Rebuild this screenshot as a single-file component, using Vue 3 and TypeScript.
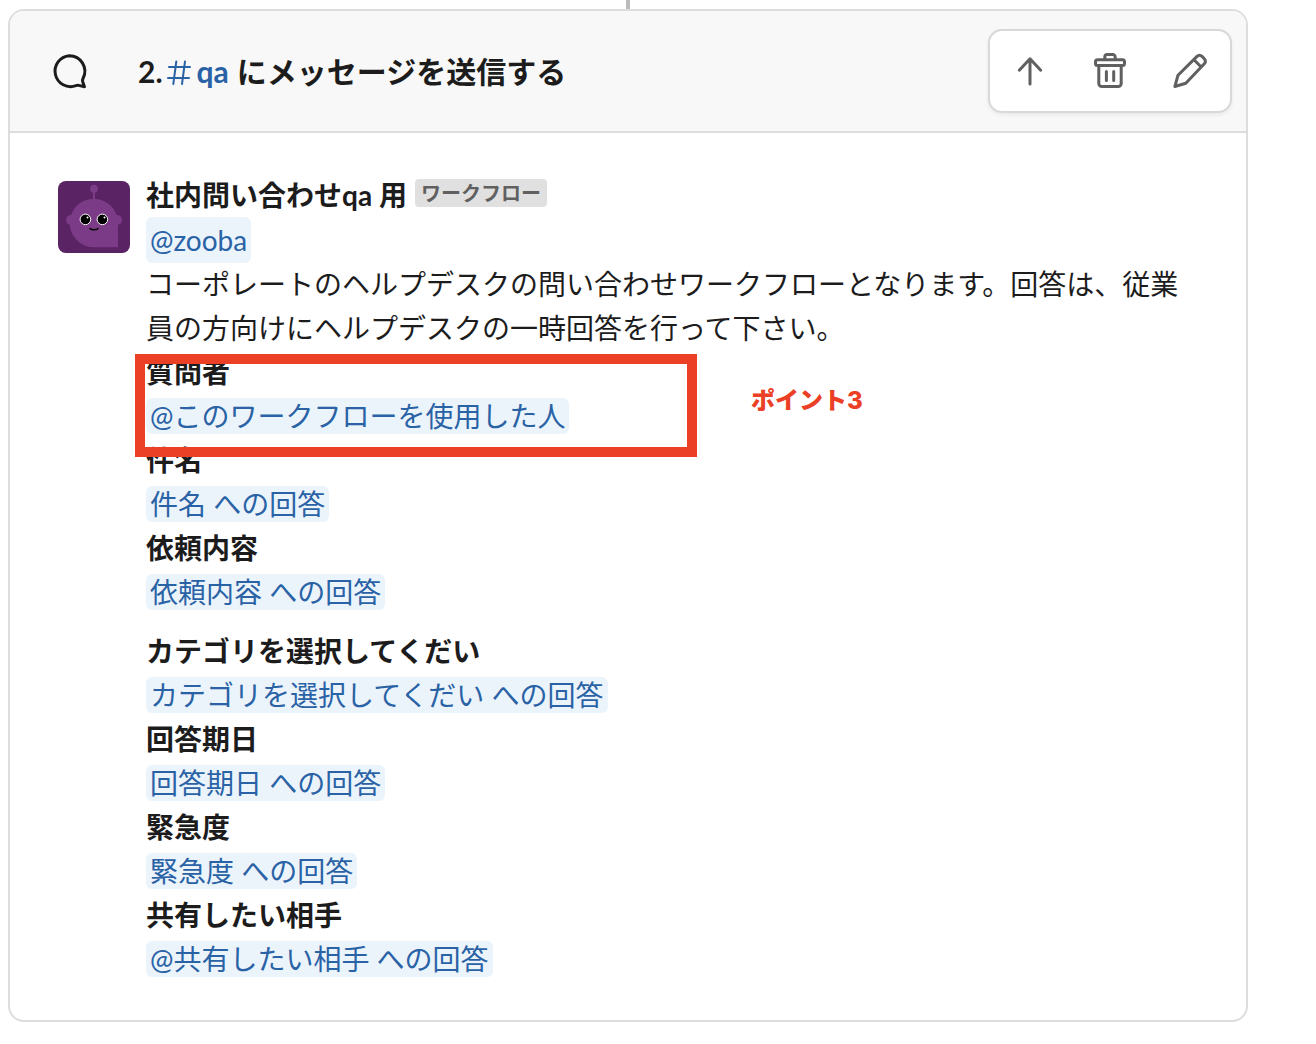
<script setup lang="ts">
interface Field {
  label: string
  value: string
  spaced?: boolean
}

const channel = 'qa'

const fields: Field[] = [
  { label: '質問者', value: '@このワークフローを使用した人' },
  { label: '件名', value: '件名 への回答' },
  { label: '依頼内容', value: '依頼内容 への回答' },
  { label: 'カテゴリを選択してくだい', value: 'カテゴリを選択してくだい への回答', spaced: true },
  { label: '回答期日', value: '回答期日 への回答' },
  { label: '緊急度', value: '緊急度 への回答' },
  { label: '共有したい相手', value: '@共有したい相手 への回答' },
]
</script>

<template>
  <main class="page">
    <div class="connector"></div>
    <section class="step">
      <header class="step-header">
        <svg class="icon bubble" viewBox="0 0 40 40" aria-hidden="true">
          <path d="M19.3 4.700a15.500 15.500 0 0 1 13.800 22.600c-.6 1.200-.7 2.200-.4 3.400l1.800 5-5.800-1.300c-1-.2-1.900-.1-2.800.3A15.500 15.500 0 1 1 19.300 4.700z" />
        </svg>
        <h2 class="title">
          <span>2.</span>
          <span class="channel">
            <svg class="hash" viewBox="0 0 24 24" aria-hidden="true">
              <path d="M2 8h21M1 19h21M9.300 2.500 6.300 25M18 2.500l-3 22.500" />
            </svg>
            <span>{{ channel }}</span>
          </span>
          <span>にメッセージを送信する</span>
        </h2>
        <div class="actions">
          <button type="button" aria-label="上に移動">
            <svg class="icon" viewBox="0 0 40 40"><path d="M20 33V8M9.300 19.200 20 7.800l10.700 11.400" /></svg>
          </button>
          <button type="button" aria-label="削除">
            <svg class="icon" viewBox="0 0 40 40">
              <path d="M14.800 8.500V6a2.500 2.500 0 0 1 2.500-2.500h5.400a2.500 2.500 0 0 1 2.500 2.500v2.500M8.800 15v17.500a3 3 0 0 0 3 3h16.400a3 3 0 0 0 3-3V15M16.400 20.500v9M23.700 20.500v9" />
              <rect x="5.500" y="8.800" width="29" height="5.600" rx="2" />
            </svg>
          </button>
          <button type="button" aria-label="編集">
            <svg class="icon" viewBox="0 0 40 40">
              <path d="M4.900 35.500 8 24.200 27 5.400c1.500-1.400 3.500-1.400 5 0l2.300 2.300c1.500 1.500 1.500 3.500 0 5L15.800 32.300zM24 8.800l7.200 7.200" />
            </svg>
          </button>
        </div>
      </header>

      <div class="message">
        <svg class="avatar" viewBox="0 0 72 72" aria-hidden="true">
          <rect width="72" height="72" fill="#5a2364" />
          <g fill="#7c3b87">
            <circle cx="36" cy="7.700" r="4" />
            <rect x="35" y="9" width="2" height="12" />
            <circle cx="13" cy="39" r="5" />
            <circle cx="59" cy="39" r="5" />
            <path d="M36 17.700A24.300 24.300 0 0 0 36 66.300H60V42A24.300 24.300 0 0 0 36 17.700z" />
          </g>
          <circle cx="27.400" cy="38.400" r="5.300" fill="#000" stroke="#fff" />
          <circle cx="44.400" cy="38.400" r="5.300" fill="#000" stroke="#fff" />
          <circle cx="29.500" cy="36.500" r="1" fill="#fff" />
          <circle cx="46.500" cy="36.500" r="1" fill="#fff" />
          <path d="M31.500 47.300q4.500 3 9 0" fill="none" stroke="#000" stroke-width="1.500" />
        </svg>
        <div class="content">
          <div class="author">
            <strong>社内問い合わせqa 用</strong>
            <span class="badge">ワークフロー</span>
          </div>
          <div class="mention"><span class="chip tall">@zooba</span></div>
          <p class="text">コーポレートのヘルプデスクの問い合わせワークフローとなります。回答は、従業員の方向けにヘルプデスクの一時回答を行って下さい。</p>
          <dl class="fields">
            <div v-for="field in fields" :key="field.label" :class="{ spaced: field.spaced }">
              <dt>{{ field.label }}</dt>
              <dd><span class="chip">{{ field.value }}</span></dd>
            </div>
            <div class="callout">
              <div class="frame"></div>
              <span class="note">ポイント3</span>
            </div>
          </dl>
        </div>
      </div>
    </section>
  </main>
</template>

<style>
body {
  background: #fff;
}
</style>

<style scoped>
.page {
  box-sizing: border-box;
  padding: 0 68px 22px 8px;
  color: #1d1c1d;
  font-family: Lato, "Noto Sans CJK JP", sans-serif;
  font-size: 28px;
  line-height: 44px;
}

.connector {
  width: 4px;
  height: 9px;
  margin: 0 auto;
  background: #bbb;
}

.step {
  border: 2px solid #ddd;
  border-radius: 16px;
  overflow: hidden;
}

.step-header {
  display: flex;
  align-items: center;
  min-height: 120px;
  padding: 0 14px 0 40px;
  border-bottom: 2px solid #ddd;
  background: #f8f8f8;
}

.icon {
  display: block;
  width: 40px;
  height: 40px;
  fill: none;
  stroke: currentColor;
  stroke-width: 3;
  stroke-linecap: round;
  stroke-linejoin: round;
}

.bubble {
  flex: none;
}

.title {
  display: flex;
  flex: 1;
  align-items: center;
  gap: 8px;
  margin: 0 0 0 48px;
  font-size: 30px;
  font-weight: 700;
}

.channel {
  display: flex;
  align-items: center;
  gap: 6px;
  margin-left: -4px;
  color: #2a62a6;
}

.hash {
  width: 24px;
  height: 24px;
  overflow: visible;
  fill: none;
  stroke: currentColor;
  stroke-width: 2;
  stroke-linecap: round;
}

.actions {
  display: flex;
  border: 2px solid #d8d8d8;
  border-radius: 14px;
  background: #fff;
  box-shadow: 0 2px 4px rgba(0, 0, 0, 0.06);
}

.actions button {
  display: grid;
  place-items: center;
  width: 80px;
  height: 80px;
  padding: 0;
  border: 0;
  background: none;
  color: #616061;
}

.message {
  display: flex;
  gap: 16px;
  padding: 40px 48px 39px;
}

.avatar {
  flex: none;
  width: 72px;
  height: 72px;
  margin-top: 8px;
  border-radius: 8px;
}

.content {
  flex: 1;
  min-width: 0;
}

.author {
  display: flex;
  align-items: center;
  gap: 8px;
}

.badge {
  margin-bottom: 4px;
  padding: 0 6px;
  border-radius: 4px;
  background: #e0e0e0;
  color: #616061;
  font-size: 20px;
  font-weight: 700;
  line-height: 28px;
}

.chip {
  display: block;
  padding: 0 4px;
  border-radius: 6px;
  background: #ecf4fb;
  color: #2a62a6;
  line-height: 36px;
}

.tall {
  line-height: 46px;
}

.mention,
.fields dd {
  display: flex;
  align-items: center;
  height: 44px;
}

.mention {
  align-items: flex-start;
  height: 45px;
}

.text,
.fields,
.fields dd {
  margin: 0;
}

.fields {
  position: relative;
}

.fields dt {
  font-weight: 700;
}

.spaced {
  margin-top: 15px;
}

.callout {
  position: absolute;
  top: 4px;
  left: -11px;
  display: flex;
  align-items: center;
  gap: 54px;
  color: #eb4026;
  font-family: Inter, "Noto Sans CJK JP", sans-serif;
  font-size: 24px;
  font-weight: 800;
  line-height: 36px;
}

.note {
  padding-bottom: 10px;
}

.frame {
  box-sizing: border-box;
  width: 562px;
  height: 103px;
  border: 10px solid #eb4026;
}
</style>
